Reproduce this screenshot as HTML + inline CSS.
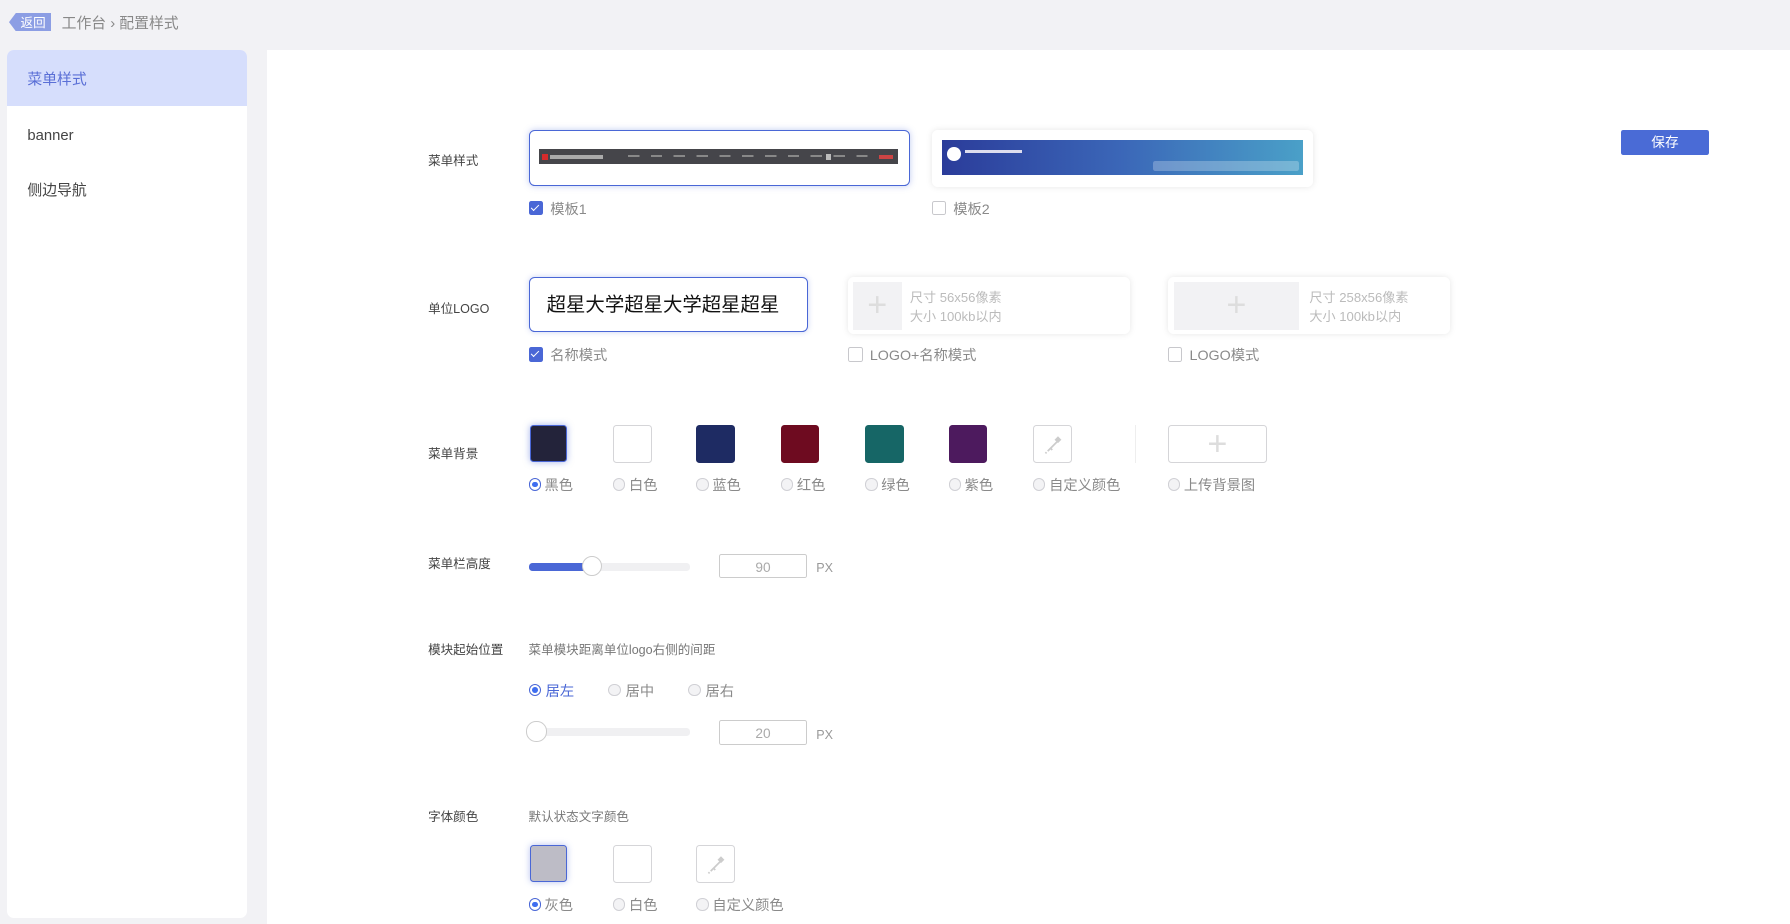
<!DOCTYPE html>
<html><head><meta charset="utf-8"><style>
html,body{margin:0;padding:0;width:1790px;height:924px;overflow:hidden;background:#f2f2f5}
#z{zoom:1.14158;position:relative;width:1568px;height:810px;font-family:"Liberation Sans","Noto Sans CJK SC",sans-serif;color:#333}
.a{position:absolute}
.t{position:absolute;line-height:18px;white-space:nowrap;margin-top:2px}
.lbl{font-size:11px;color:#444}
.g{font-size:12.5px;color:#8a8a8a}
.cb{position:absolute;width:11px;height:11px;border:1px solid #c8c8cc;border-radius:2px;background:#fff}
.cb.on{background:#4a67d6;border-color:#4a67d6}
.cb.on:after{content:"";position:absolute;left:3px;top:1px;width:3px;height:6px;border:solid #fff;border-width:0 1.5px 1.5px 0;transform:rotate(45deg)}
.rd{position:absolute;width:9px;height:9px;border:1px solid #d0d0d5;border-radius:50%;background:#f3f3f5}
.rd.on{border-color:#4a67d6;background:#fff}
.rd.on:after{content:"";position:absolute;left:2px;top:2px;width:5px;height:5px;border-radius:50%;background:#3f6ef0}
.sw{position:absolute;width:32px;height:32px;border:1px solid #d5d5d8;border-radius:3px;top:372px}
.shadow{box-shadow:0 0 6px rgba(0,0,0,.1);border-radius:5px;background:#fff}
.inp{position:absolute;width:75px;height:20px;border:1px solid #ccc;border-radius:2px;text-align:center;line-height:22px;font-size:12px;color:#aaa}
</style></head><body><div id="z">
<div class="a" style="left:8px;top:11px;width:37px;height:16px">
<svg width="37" height="16" style="position:absolute;left:0;top:0"><path d="M6 0H37V16H6L0 8Z" fill="#8c9ee4"/></svg>
<span class="t" style="left:10px;top:-2px;font-size:11px;color:#fff">返回</span></div>
<span class="t" style="left:54px;top:10px;font-size:13px;color:#888">工作台 › 配置样式</span>
<div class="a" style="left:6px;top:44px;width:210px;height:760px;background:#fff;border-radius:6px;overflow:hidden">
<div class="a" style="left:0;top:0;width:210px;height:49px;background:#d6defc"></div>
<span class="t" style="left:18px;top:15px;font-size:13px;color:#5a6fd6">菜单样式</span>
<span class="t" style="left:18px;top:64px;font-size:13px;color:#444">banner</span>
<span class="t" style="left:18px;top:113px;font-size:13px;color:#444">侧边导航</span>
</div>
<div class="a" style="left:234px;top:44px;width:1334px;height:770px;background:#fff"></div>
<span class="t lbl" style="left:375px;top:130px">菜单样式</span>
<div class="a" style="left:463px;top:114px;width:332px;height:47px;border:1.5px solid #4a67d6;border-radius:5px;background:#fff;box-shadow:0 0 6px rgba(74,103,214,.35)">
<div class="a" style="left:8px;top:16px;width:315px;height:13px;background:#45454a">
<div class="a" style="left:3px;top:4px;width:5px;height:5px;background:#d62b2b"></div>
<div class="a" style="left:10px;top:5px;width:46px;height:3px;background:#aaa"></div>
<div class="a" style="left:78px;top:5px;width:220px;height:2px;background:repeating-linear-gradient(90deg,#888 0 10px,transparent 10px 20px)"></div>
<div class="a" style="left:252px;top:4px;width:4px;height:5px;background:#bbb"></div>
<div class="a" style="left:298px;top:5px;width:12px;height:3px;background:#c44"></div></div></div>
<div class="a shadow" style="left:816px;top:114px;width:334px;height:50px">
<div class="a" style="left:9px;top:9px;width:316px;height:30px;background:linear-gradient(90deg,#2b3c9a,#3b67b8 50%,#4aa0c8)">
<div class="a" style="left:5px;top:6px;width:12px;height:12px;border-radius:50%;background:#fff"></div>
<div class="a" style="left:20px;top:8px;width:50px;height:3px;background:#dde"></div>
<div class="a" style="left:185px;top:18px;width:128px;height:9px;background:rgba(255,255,255,.25);border-radius:2px"></div></div></div>
<div class="cb on" style="left:463px;top:176px"></div><span class="t g" style="left:482px;top:173px">模板1</span>
<div class="cb" style="left:816px;top:176px"></div><span class="t g" style="left:835px;top:173px">模板2</span>
<div class="a" style="left:1420px;top:114px;width:77px;height:22px;background:#4a6bd6;border-radius:2px;color:#fff;font-size:12px;text-align:center;line-height:22px">保存</div>
<span class="t lbl" style="left:375px;top:260px">单位LOGO</span>
<div class="a" style="left:463px;top:243px;width:243px;height:46px;border:1.5px solid #4a67d6;border-radius:5px;background:#fff;box-shadow:0 0 5px rgba(74,103,214,.3)">
<span class="t" style="left:15px;top:12px;font-size:17px;line-height:20px;color:#111">超星大学超星大学超星超星</span></div>
<div class="a shadow" style="left:743px;top:243px;width:247px;height:50px">
<div class="a" style="left:4px;top:4px;width:43px;height:42px;background:#f2f2f4;color:#ddd;font-size:30px;text-align:center;line-height:42px">+</div>
<span class="t" style="left:54px;top:7px;font-size:11.5px;color:#bbb">尺寸 56x56像素</span>
<span class="t" style="left:54px;top:24px;font-size:11.5px;color:#bbb">大小 100kb以内</span></div>
<div class="a shadow" style="left:1023px;top:243px;width:247px;height:50px">
<div class="a" style="left:5px;top:4px;width:110px;height:42px;background:#f2f2f4;color:#ddd;font-size:30px;text-align:center;line-height:42px">+</div>
<span class="t" style="left:124px;top:7px;font-size:11.5px;color:#bbb">尺寸 258x56像素</span>
<span class="t" style="left:124px;top:24px;font-size:11.5px;color:#bbb">大小 100kb以内</span></div>
<div class="cb on" style="left:463px;top:304px"></div><span class="t g" style="left:482px;top:301px">名称模式</span>
<div class="cb" style="left:743px;top:304px"></div><span class="t g" style="left:762px;top:301px">LOGO+名称模式</span>
<div class="cb" style="left:1023px;top:304px"></div><span class="t g" style="left:1042px;top:301px">LOGO模式</span>
<span class="t lbl" style="left:375px;top:387px">菜单背景</span>
<div class="sw" style="left:464px;background:#23233a;border:1.5px solid #4a67d6;width:31px;height:31px;box-shadow:0 0 6px rgba(74,103,214,.5)"></div>
<div class="sw" style="left:537px;background:#fff"></div>
<div class="sw" style="left:610px;background:#1e2b63;border-color:#1e2b63"></div>
<div class="sw" style="left:684px;background:#6e0b20;border-color:#6e0b20"></div>
<div class="sw" style="left:758px;background:#166666;border-color:#166666"></div>
<div class="sw" style="left:831px;background:#4d1a5e;border-color:#4d1a5e"></div>
<div class="sw" style="left:905px;background:#fff"><svg width="32" height="32"><g fill="none" stroke="#ccc" stroke-width="1.5"><path d="M12 22l8-8M11 23l-1 1M14 19l2 2"/></g><path d="M18 12l3-3 3 3-3 3z" fill="#ccc"/></svg></div>
<div class="a" style="left:994px;top:372px;width:1px;height:34px;background:#eee"></div>
<div class="sw" style="left:1023px;width:85px;background:#fff;color:#ddd;font-size:30px;text-align:center;line-height:32px">+</div>
<div class="rd on" style="left:463px;top:419px"></div><span class="t g" style="left:477px;top:415px">黑色</span>
<div class="rd" style="left:537px;top:419px"></div><span class="t g" style="left:551px;top:415px">白色</span>
<div class="rd" style="left:610px;top:419px"></div><span class="t g" style="left:624px;top:415px">蓝色</span>
<div class="rd" style="left:684px;top:419px"></div><span class="t g" style="left:698px;top:415px">红色</span>
<div class="rd" style="left:758px;top:419px"></div><span class="t g" style="left:772px;top:415px">绿色</span>
<div class="rd" style="left:831px;top:419px"></div><span class="t g" style="left:845px;top:415px">紫色</span>
<div class="rd" style="left:905px;top:419px"></div><span class="t g" style="left:919px;top:415px">自定义颜色</span>
<div class="rd" style="left:1023px;top:419px"></div><span class="t g" style="left:1037px;top:415px">上传背景图</span>
<span class="t lbl" style="left:375px;top:483px">菜单栏高度</span>
<div class="a" style="left:463px;top:493px;width:141px;height:7px;background:#f0f0f2;border-radius:3px"></div>
<div class="a" style="left:463px;top:493px;width:56px;height:7px;background:#4a67d6;border-radius:3px 0 0 3px"></div>
<div class="a" style="left:510px;top:487px;width:16px;height:16px;border:1.5px solid #ccc;border-radius:50%;background:#fff"></div>
<div class="inp" style="left:630px;top:485px">90</div>
<span class="t" style="left:715px;top:487px;font-size:11px;color:#999">PX</span>
<span class="t lbl" style="left:375px;top:559px">模块起始位置</span>
<span class="t" style="left:463px;top:559px;font-size:11px;color:#777">菜单模块距离单位logo右侧的间距</span>
<div class="rd on" style="left:463px;top:599px"></div><span class="t" style="left:478px;top:595px;font-size:12.5px;color:#4a67d6">居左</span>
<div class="rd" style="left:533px;top:599px"></div><span class="t g" style="left:548px;top:595px">居中</span>
<div class="rd" style="left:603px;top:599px"></div><span class="t g" style="left:618px;top:595px">居右</span>
<div class="a" style="left:463px;top:638px;width:141px;height:7px;background:#f0f0f2;border-radius:3px"></div>
<div class="a" style="left:461px;top:632px;width:16px;height:16px;border:1.5px solid #ccc;border-radius:50%;background:#fff"></div>
<div class="inp" style="left:630px;top:631px">20</div>
<span class="t" style="left:715px;top:633px;font-size:11px;color:#999">PX</span>
<span class="t lbl" style="left:375px;top:705px">字体颜色</span>
<span class="t" style="left:463px;top:705px;font-size:11px;color:#777">默认状态文字颜色</span>
<div class="sw" style="left:464px;top:740px;background:#bdbcc6;border:1.5px solid #4a67d6;width:31px;height:31px;box-shadow:0 0 6px rgba(74,103,214,.4)"></div>
<div class="sw" style="left:537px;top:740px;background:#fff"></div>
<div class="sw" style="left:610px;top:740px;background:#fff"><svg width="32" height="32"><g fill="none" stroke="#ccc" stroke-width="1.5"><path d="M12 22l8-8M11 23l-1 1M14 19l2 2"/></g><path d="M18 12l3-3 3 3-3 3z" fill="#ccc"/></svg></div>
<div class="rd on" style="left:463px;top:787px"></div><span class="t g" style="left:477px;top:783px">灰色</span>
<div class="rd" style="left:537px;top:787px"></div><span class="t g" style="left:551px;top:783px">白色</span>
<div class="rd" style="left:610px;top:787px"></div><span class="t g" style="left:624px;top:783px">自定义颜色</span>
</div></body></html>
